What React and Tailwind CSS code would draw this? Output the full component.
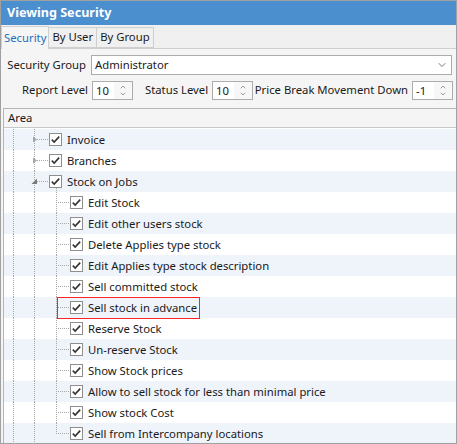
import { ChevronDown, ChevronUp } from "lucide-react";

const ROWS = [
  { label: "Invoice", level: 1, arrow: "right" },
  { label: "Branches", level: 1, arrow: "right" },
  { label: "Stock on Jobs", level: 1, arrow: "down" },
  { label: "Edit Stock", level: 2 },
  { label: "Edit other users stock", level: 2 },
  { label: "Delete Applies type stock", level: 2 },
  { label: "Edit Applies type stock description", level: 2 },
  { label: "Sell committed stock", level: 2 },
  { label: "Sell stock in advance", level: 2, marked: true },
  { label: "Reserve Stock", level: 2 },
  { label: "Un-reserve Stock", level: 2 },
  { label: "Show Stock prices", level: 2 },
  { label: "Allow to sell stock for less than minimal price", level: 2 },
  { label: "Show stock Cost", level: 2 },
  { label: "Sell from Intercompany locations", level: 2, last: true },
];

const Spin = ({ value }) => (
  <div className="flex h-[19px] w-[41px] shrink-0 items-center border border-[#acacac] bg-white">
    <span className="flex-1 pl-[3px] pt-px leading-none text-[#1a1a1a]">{value}</span>
    <div className="flex h-full w-[18px] flex-col items-center justify-center bg-[#f7f7f7] text-[#8a8a8a]">
      <ChevronUp size={8} strokeWidth={2.5} className="-mb-[1px]" />
      <ChevronDown size={8} strokeWidth={2.5} />
    </div>
  </div>
);

const Check = () => (
  <div className="flex h-[13px] w-[13px] shrink-0 items-center justify-center border border-[#8e8e8e] bg-white">
    <svg width="11" height="11" viewBox="0 0 11 11">
      <path d="M1.8 5.6 L4.2 8 L9.2 2.6" fill="none" stroke="#333" strokeWidth="1.6" />
    </svg>
  </div>
);

// tree connector lines, drawn per row
const Guides = ({ row }) => {
  const dot = { stroke: "#a8a8a8", strokeWidth: 1, strokeDasharray: "1 1" };
  return (
    <svg className="absolute left-0 top-0" width="90" height="21">
      <line x1="9.5" y1="0" x2="9.5" y2="21" {...dot} />
      <line x1="30.5" y1="0" x2="30.5" y2="21" {...dot} />
      {row.level === 1 && <line x1="33" y1="10.5" x2="45" y2="10.5" {...dot} />}
      {row.level === 2 && (
        <>
          <line x1="52.5" y1="0" x2="52.5" y2={row.last ? 11 : 21} {...dot} />
          <line x1="54" y1="10.5" x2="66" y2="10.5" {...dot} />
        </>
      )}
      {row.arrow === "down" && <line x1="52.5" y1="17" x2="52.5" y2="21" {...dot} />}
      {row.arrow === "right" && <path d="M29 7.5 L33 10.5 L29 13.5 Z" fill="#a6a6a6" />}
      {row.arrow === "down" && <path d="M33 7.5 L33 13 L27.5 13 Z" fill="#7a7a7a" />}
    </svg>
  );
};

export default function App() {
  return (
    <div
      className="flex h-[444px] w-[457px] flex-col overflow-hidden border border-[#a0a0a0] bg-[#f0f0f0] text-[11.3px] text-[#1a1a1a]"
      style={{ fontFamily: '"Noto Sans", "Open Sans", sans-serif' }}
    >
      <div className="flex h-[24px] shrink-0 items-center bg-[#4b8fce] pl-[6px] text-[12.6px] font-bold text-white">
        Viewing Security
      </div>

      <div className="flex h-[23px] shrink-0 items-end whitespace-nowrap">
        <div className="relative -mb-px flex h-[23px] items-center border border-b-0 border-[#cfcfcf] bg-[#f5f5f5] px-[2px] text-[#1f6fbf]">
          Security
        </div>
        <div className="flex h-[21px] items-center border border-l-0 border-[#cfcfcf] bg-[#f0f0f0] px-[3px]">
          By User
        </div>
        <div className="flex h-[21px] items-center border border-l-0 border-[#cfcfcf] bg-[#f0f0f0] px-[3px]">
          By Group
        </div>
      </div>

      <div className="flex flex-1 flex-col border-t border-[#cfcfcf] bg-[#f5f5f5] pl-[2px]">
        <div className="mt-[6px] flex items-center whitespace-nowrap">
          <span className="w-[88px] shrink-0 pr-[5px] text-right">Security Group</span>
          <div className="flex h-[20px] w-[361px] items-center justify-between border border-[#acacac] bg-white px-[3px]">
            <span className="pt-px">Administrator</span>
            <ChevronDown size={12} strokeWidth={2} className="text-[#777]" />
          </div>
        </div>

        <div className="mt-[6px] flex items-center whitespace-nowrap">
          <span className="w-[89px] shrink-0 pr-[4px] text-right">Report Level</span>
          <Spin value="10" />
          <span className="ml-[12px] w-[67px] shrink-0">Status Level</span>
          <Spin value="10" />
          <span className="flex-1 pr-[4px] text-right">Price Break Movement Down</span>
          <Spin value="-1" />
          <span className="w-[3px] shrink-0" />
        </div>

        <div className="mt-[8px] flex flex-1 flex-col border-l border-t border-[#b4b4b4] bg-white">
          <div className="flex h-[19px] shrink-0 items-center border-b border-[#c8c8c8] bg-[#f5f5f5] pl-[4px] pt-px">
            Area
          </div>
          <div className="mt-px flex flex-col">
            {ROWS.map((row, i) => (
              <div
                key={row.label}
                className={`relative flex h-[21px] shrink-0 items-center ${i % 2 === 0 ? "bg-[#eff3fa]" : "bg-white"}`}
              >
                <Guides row={row} />
                <div className={`relative flex items-center ${row.level === 1 ? "pl-[45px]" : "pl-[66px]"}`}>
                  <Check />
                  <span className="ml-[5px] whitespace-nowrap pt-[2px]">{row.label}</span>
                </div>
                {row.marked && (
                  <div className="absolute left-[53px] top-0 z-10 h-[22px] w-[143px] border border-solid border-[#ff2020]" />
                )}
              </div>
            ))}
          </div>
        </div>
      </div>
    </div>
  );
}
